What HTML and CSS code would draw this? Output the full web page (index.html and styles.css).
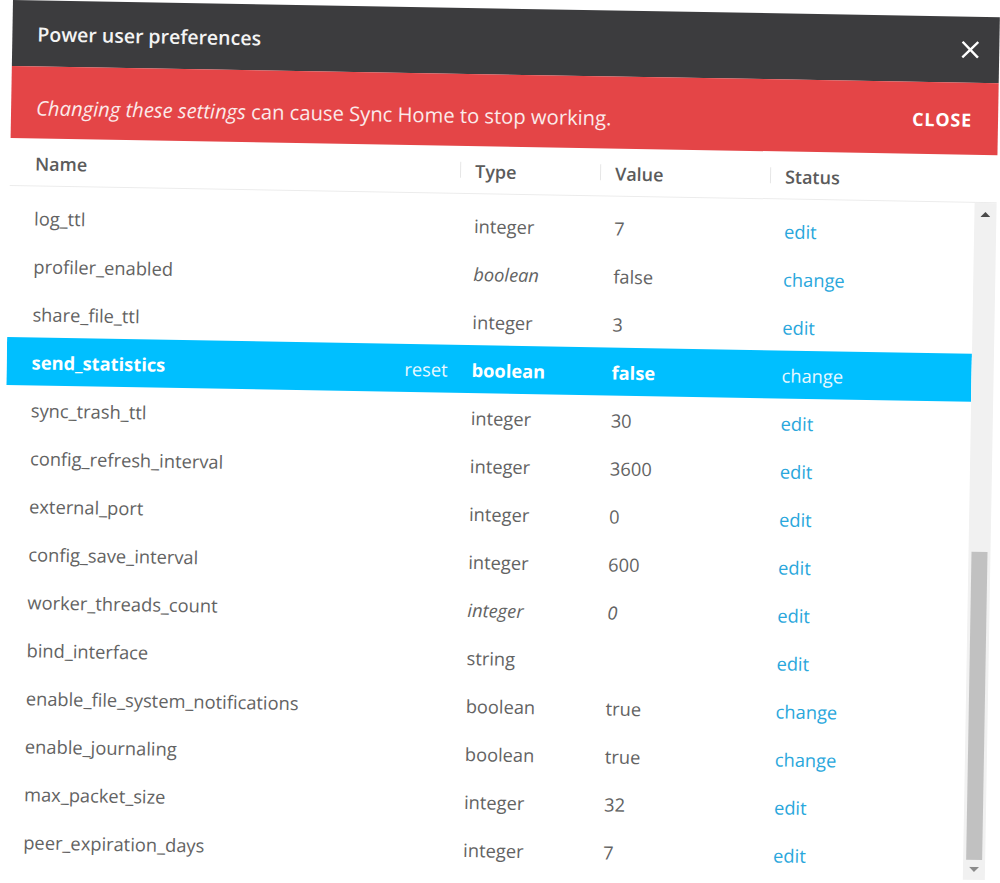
FILE: index.html
```html
<!DOCTYPE html>
<html lang="en">
<head>
<meta charset="utf-8">
<title>Power user preferences</title>
<link rel="stylesheet" href="styles.css">
</head>
<body>
<div class="dialog">
  <div class="header">
    <div class="title">Power user preferences</div>
    <svg class="x-icon" width="18" height="18" viewBox="0 0 18 18"><path d="M2 2 L16 16 M16 2 L2 16" stroke="#ffffff" stroke-width="2.4" stroke-linecap="square"/></svg>
  </div>
  <div class="warning">
    <div class="warning-text"><em>Changing these settings</em> can cause Sync Home to stop working.</div>
    <div class="warning-close">CLOSE</div>
  </div>
  <div class="thead">
    <div class="th">Name</div>
    <div class="th sep">Type</div>
    <div class="th sep">Value</div>
    <div class="th sep">Status</div>
  </div>
  <div class="body">
    <div class="rows">
      <div class="row"><div class="c name">log_ttl</div><div class="c">integer</div><div class="c">7</div><div class="c link">edit</div></div>
      <div class="row"><div class="c name">profiler_enabled</div><div class="c it">boolean</div><div class="c">false</div><div class="c link">change</div></div>
      <div class="row"><div class="c name">share_file_ttl</div><div class="c">integer</div><div class="c">3</div><div class="c link">edit</div></div>
      <div class="row selected"><div class="c name"><span>send_statistics</span><span class="reset">reset</span></div><div class="c">boolean</div><div class="c">false</div><div class="c link">change</div></div>
      <div class="row"><div class="c name">sync_trash_ttl</div><div class="c">integer</div><div class="c">30</div><div class="c link">edit</div></div>
      <div class="row"><div class="c name">config_refresh_interval</div><div class="c">integer</div><div class="c">3600</div><div class="c link">edit</div></div>
      <div class="row"><div class="c name">external_port</div><div class="c">integer</div><div class="c">0</div><div class="c link">edit</div></div>
      <div class="row"><div class="c name">config_save_interval</div><div class="c">integer</div><div class="c">600</div><div class="c link">edit</div></div>
      <div class="row"><div class="c name">worker_threads_count</div><div class="c it">integer</div><div class="c it">0</div><div class="c link">edit</div></div>
      <div class="row"><div class="c name">bind_interface</div><div class="c">string</div><div class="c"></div><div class="c link">edit</div></div>
      <div class="row"><div class="c name">enable_file_system_notifications</div><div class="c">boolean</div><div class="c">true</div><div class="c link">change</div></div>
      <div class="row"><div class="c name">enable_journaling</div><div class="c">boolean</div><div class="c">true</div><div class="c link">change</div></div>
      <div class="row"><div class="c name">max_packet_size</div><div class="c">integer</div><div class="c">32</div><div class="c link">edit</div></div>
      <div class="row"><div class="c name">peer_expiration_days</div><div class="c">integer</div><div class="c">7</div><div class="c link">edit</div></div>
    </div>
    <div class="scrollbar">
      <div class="arrow up"><svg width="10" height="6" viewBox="0 0 10 6"><path d="M0 6 L5 1 L10 6 Z" fill="#4a4a4a"/></svg></div>
      <div class="track"><div class="thumb"></div></div>
      <div class="arrow down"><svg width="10" height="6" viewBox="0 0 10 6"><path d="M0 0 L5 5 L10 0 Z" fill="#8a8a8a"/></svg></div>
    </div>
  </div>
</div>
</body>
</html>
```
FILE: styles.css
```css
html, body {
  margin: 0;
  padding: 0;
  background: #ffffff;
}
body {
  font-family: "Open Sans", "Noto Sans", sans-serif;
  overflow: hidden;
  height: 883px;
}
.dialog {
  margin-left: 13px;
  width: 987px;
  transform: rotate(1deg);
  transform-origin: 0 0;
  background: #ffffff;
}
.header {
  height: 66px;
  background: #3c3c3e;
  display: flex;
  align-items: center;
  justify-content: space-between;
  padding: 0 20px 0 25px;
  box-sizing: border-box;
}
.title {
  color: #f4f4f4;
  font-size: 19.5px;
  font-weight: 600;
}
.x-icon {
  display: block;
}
.warning {
  height: 72px;
  background: #e44547;
  display: flex;
  align-items: center;
  justify-content: space-between;
  padding: 0 26px 0 25px;
  box-sizing: border-box;
  color: #ffffff;
}
.warning-text {
  font-size: 20.2px;
  padding-top: 9px;
  color: #fbeaea;
}
.warning-close {
  font-size: 18px;
  font-weight: 700;
  letter-spacing: 0.8px;
  margin-top: 1px;
}
.thead {
  height: 48px;
  display: grid;
  grid-template-columns: 450px 140px 170px 1fr;
  border-bottom: 1px solid #ececec;
  box-sizing: border-box;
  align-items: center;
}
.th {
  font-size: 18px;
  font-weight: 600;
  color: #5b5b5b;
  padding-left: 15px;
  padding-top: 2px;
  position: relative;
}
.th:first-child {
  padding-left: 25px;
}
.th.sep::before {
  content: "";
  position: absolute;
  left: 0;
  top: 5px;
  height: 16px;
  border-left: 1px solid #e6e6e6;
}
.body {
  display: flex;
  height: 677px;
}
.rows {
  width: 965px;
  padding-top: 7px;
  overflow: hidden;
  box-sizing: border-box;
}
.row {
  height: 48px;
  display: grid;
  grid-template-columns: 450px 140px 170px 1fr;
  align-items: center;
  font-size: 18.3px;
  color: #636363;
}
.c {
  padding-left: 15px;
  white-space: nowrap;
}
.c.name {
  padding-left: 25px;
  padding-right: 9px;
  display: flex;
  justify-content: space-between;
}
.it {
  font-style: italic;
}
.link {
  color: #2aa7dc;
}
.row.selected {
  background: #00bfff;
  color: #ffffff;
  font-weight: 700;
}
.row.selected .link,
.row.selected .reset {
  color: #e8f8ff;
  font-weight: 400;
}
.scrollbar {
  width: 22px;
  background: #f1f1f1;
  display: flex;
  flex-direction: column;
}
.arrow {
  height: 22px;
  display: flex;
  align-items: center;
  justify-content: center;
}
.arrow.down {
  height: 20px;
}
.track {
  flex: 1;
  display: flex;
  flex-direction: column;
  justify-content: flex-end;
  padding: 0 3px;
}
.thumb {
  height: 308px;
  background: #c1c1c1;
}
```
